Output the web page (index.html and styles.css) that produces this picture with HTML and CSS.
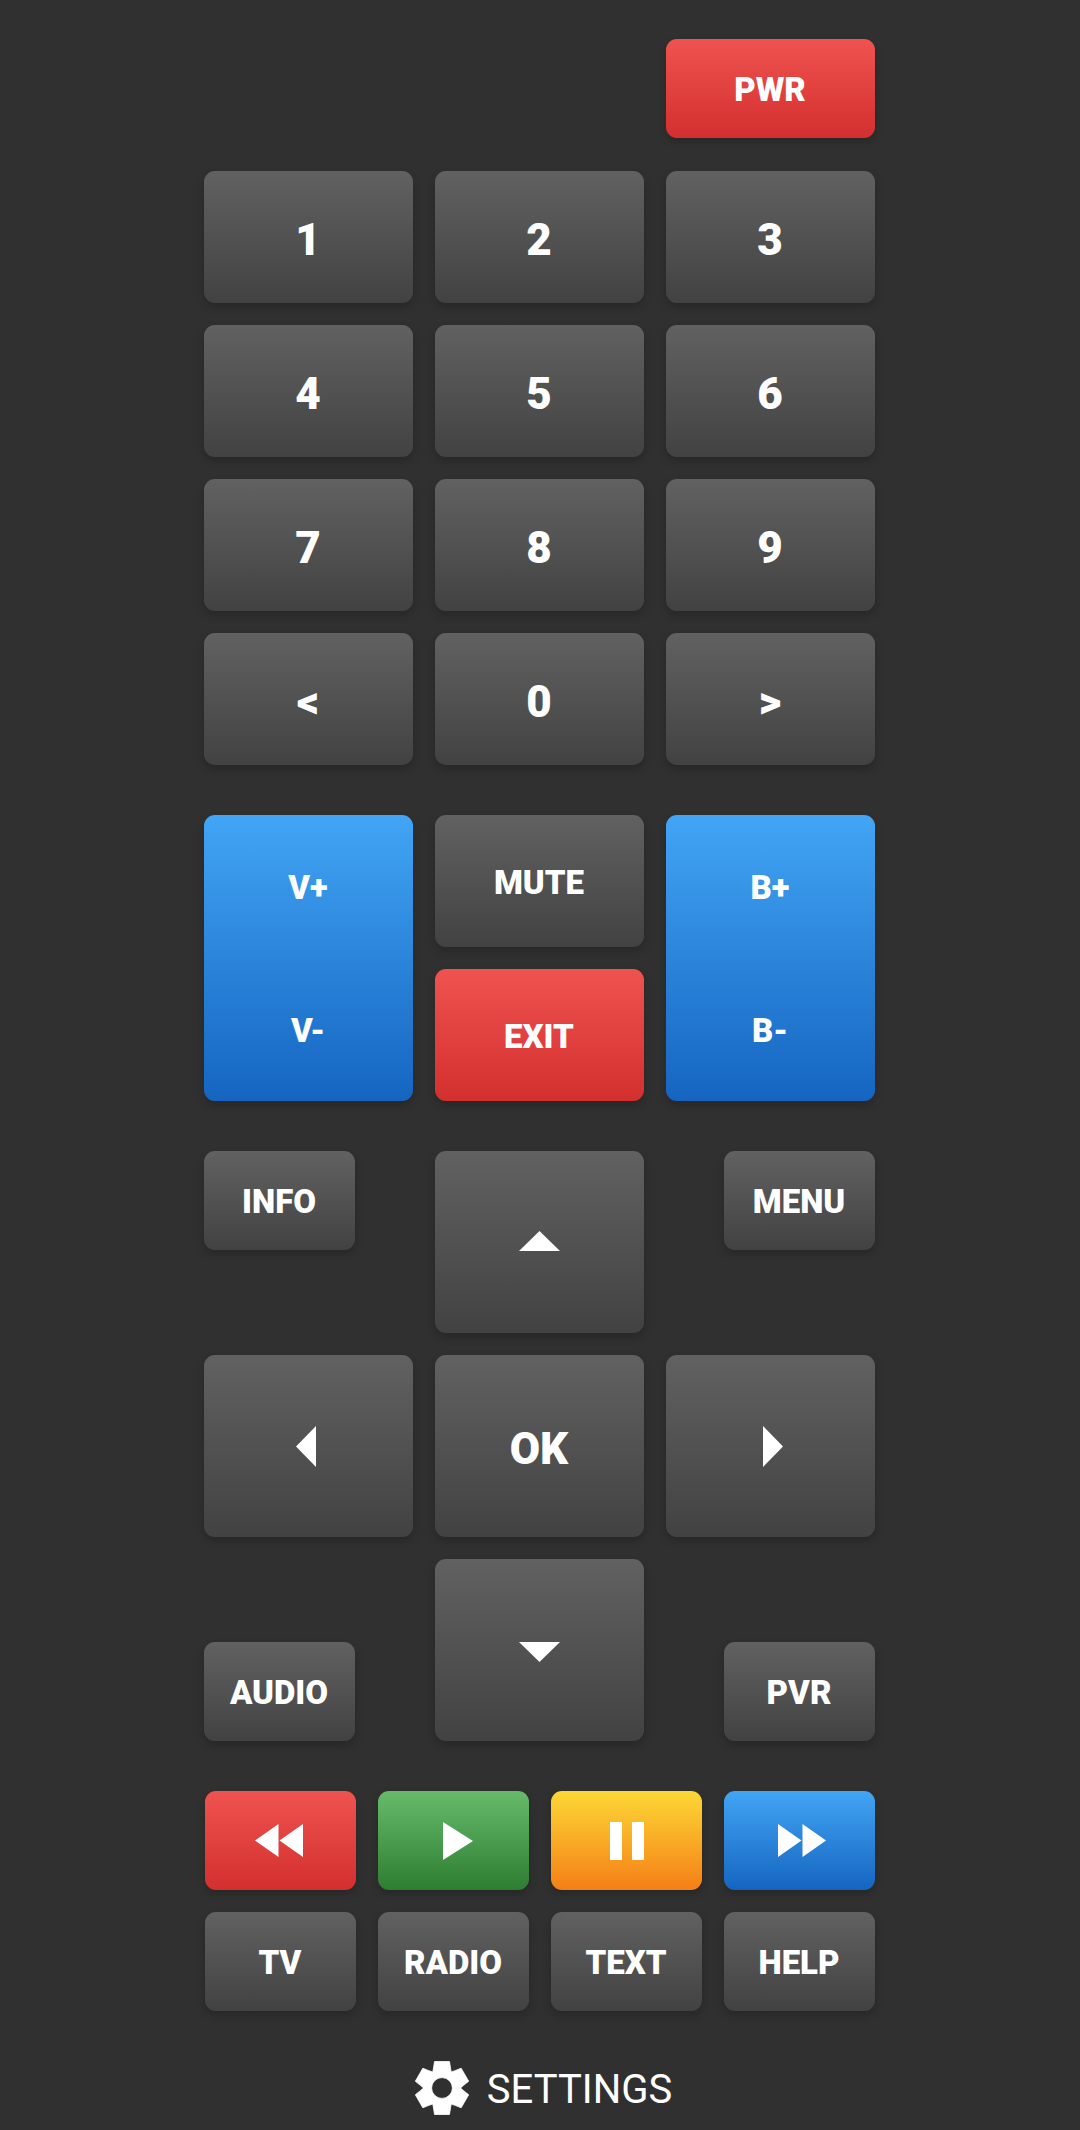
FILE: index.html
```html
<!DOCTYPE html>
<html lang="en">
<head>
<meta charset="utf-8">
<title>Remote</title>
<link rel="stylesheet" href="styles.css">
</head>
<body>
<main class="remote">
  <section class="grid3 power">
    <button class="key short red col3">PWR</button>
  </section>
  <section class="grid3 numbers">
    <button class="key tall digit">1</button>
    <button class="key tall digit">2</button>
    <button class="key tall digit">3</button>
    <button class="key tall digit">4</button>
    <button class="key tall digit">5</button>
    <button class="key tall digit">6</button>
    <button class="key tall digit">7</button>
    <button class="key tall digit">8</button>
    <button class="key tall digit">9</button>
    <button class="key tall digit">&lt;</button>
    <button class="key tall digit">0</button>
    <button class="key tall digit">&gt;</button>
  </section>
  <section class="grid3 volume">
    <div class="key blue rocker"><span>V+</span><span>V-</span></div>
    <button class="key tall">MUTE</button>
    <div class="key blue rocker"><span>B+</span><span>B-</span></div>
    <button class="key tall red">EXIT</button>
  </section>
  <section class="dpad">
    <div class="corner">
      <button class="key short side">INFO</button>
    </div>
    <button class="key pad nudge-up">
      <svg class="icon" width="41" height="20" viewBox="0 0 41 20"><path d="M20.5 0 41 20H0z"/></svg>
    </button>
    <div class="corner end">
      <button class="key short side">MENU</button>
    </div>
    <button class="key pad nudge-left">
      <svg class="icon" width="20" height="41" viewBox="0 0 20 41"><path d="M20 0 0 20.5 20 41z"/></svg>
    </button>
    <button class="key pad digit">OK</button>
    <button class="key pad nudge-right">
      <svg class="icon" width="20" height="41" viewBox="0 0 20 41"><path d="M0 0l20 20.5L0 41z"/></svg>
    </button>
    <div class="corner low">
      <button class="key short side">AUDIO</button>
    </div>
    <button class="key pad nudge-down">
      <svg class="icon" width="41" height="20" viewBox="0 0 41 20"><path d="M0 0h41L20.5 20z"/></svg>
    </button>
    <div class="corner low end">
      <button class="key short side">PVR</button>
    </div>
  </section>
  <section class="grid4 transport">
    <button class="key short red icon-key rew">
      <svg class="icon" width="48" height="33" viewBox="0 0 48 33"><path d="M23.5 0v33L0 16.500zM48 0v33L24.500 16.500z"/></svg>
    </button>
    <button class="key short green icon-key play">
      <svg class="icon" width="30" height="38" viewBox="0 0 30 38"><path d="M0 0l30 19L0 38z"/></svg>
    </button>
    <button class="key short yellow icon-key">
      <svg class="icon" width="34" height="38" viewBox="0 0 34 38"><path d="M0 0h12v38H0zM22 0h12v38H22z"/></svg>
    </button>
    <button class="key short blue icon-key fwd">
      <svg class="icon" width="48" height="33" viewBox="0 0 48 33"><path d="M0 0l23.500 16.500L0 33zM24.500 0 48 16.500 24.500 33z"/></svg>
    </button>
  </section>
  <section class="grid4 sources">
    <button class="key short">TV</button>
    <button class="key short">RADIO</button>
    <button class="key short">TEXT</button>
    <button class="key short">HELP</button>
  </section>
  <a class="settings">
    <svg class="gear" width="54" height="54" viewBox="0 0 54 54"><path fill-rule="evenodd" d="M18.500 7 19.500.5h15l1 6.500.75 3.980 3.820-1.340 6.130-2.390 7.500 13-5.130 4.110L45.500 27l3.070 2.640 5.130 4.110-7.500 13-6.130-2.390-3.820-1.340L35.500 47l-1 6.500h-15l-1-6.500-.75-3.980-3.820 1.340-6.130 2.390-7.500-13 5.130-4.110L8.500 27l-3.070-2.640-5.130-4.110 7.500-13 6.130 2.390 3.820 1.340zM37.400 27a10.400 10.400 0 1 0-20.800 0 10.400 10.400 0 1 0 20.800 0z"/></svg>
    <span class="settings-label">SETTINGS</span>
  </a>
</main>
</body>
</html>
```

FILE: styles.css
```css
* {
  box-sizing: border-box;
}

html,
body {
  margin: 0;
  background: #303030;
}

body {
  height: 2130px;
  overflow: hidden;
  font-family: Roboto, "Liberation Sans", sans-serif;
  color: #fff;
}

.remote {
  width: 671px;
  margin-left: 204px;
  padding-top: 39px;
}

.grid3 {
  display: grid;
  grid-template-columns: repeat(3, 209px);
  gap: 22px;
}

.grid4 {
  display: grid;
  grid-template-columns: repeat(4, 151px);
  gap: 22px;
  margin-left: 1px;
}

.power {
  margin-bottom: 33px;
}

.col3 {
  grid-column: 3;
}

.numbers {
  margin-bottom: 50px;
}

.volume {
  grid-template-rows: 132px 132px;
  margin-bottom: 50px;
}

.volume .rocker {
  grid-row: span 2;
}

.key {
  display: flex;
  align-items: center;
  justify-content: center;
  border: 0;
  padding: 3px 1px 0 0;
  border-radius: 11px;
  background: linear-gradient(#616161, #424242);
  box-shadow: 0 4px 8px rgba(0, 0, 0, 0.2);
  color: #fff;
  font: 900 33px/1 Roboto, "Liberation Sans", sans-serif;
}

.tall {
  height: 132px;
}

.short {
  height: 99px;
  padding-top: 1px;
}

.pad {
  height: 182px;
}

.digit {
  font-size: 44px;
  padding-top: 5px;
}

.red {
  background: linear-gradient(#ef5350, #d32f2f);
}

.blue {
  background: linear-gradient(#42a5f5, #1565c0);
}

.green {
  background: linear-gradient(#66bb6a, #2e7d32);
}

.yellow {
  background: linear-gradient(#fdd835, #f57f17);
}

.rocker {
  flex-direction: column;
  align-items: stretch;
  padding: 0 1px 0 0;
}

.rocker span {
  flex: 1;
  display: flex;
  align-items: center;
  justify-content: center;
  padding-top: 2px;
}

.dpad {
  display: grid;
  grid-template-columns: repeat(3, 209px);
  gap: 22px;
  margin-bottom: 50px;
}

.corner {
  display: flex;
}

.corner.end {
  justify-content: flex-end;
}

.corner.low {
  align-items: flex-end;
}

.side {
  width: 151px;
}

.nudge-up {
  padding: 0 0 2px;
}

.nudge-down {
  padding: 4px 0 0;
}

.nudge-left {
  padding: 0 5px 0 0;
}

.nudge-right {
  padding: 0 0 0 4px;
}

.icon-key {
  padding: 0;
}

.rew {
  padding-right: 3px;
}

.play {
  padding-left: 9px;
}

.fwd {
  padding-left: 4px;
}

.transport {
  margin-bottom: 22px;
}

.sources {
  margin-bottom: 50px;
}

.icon {
  display: block;
  fill: #fff;
}

.settings {
  display: flex;
  align-items: center;
  justify-content: center;
  gap: 18px;
  height: 54px;
  padding-left: 8px;
  font-size: 40px;
  line-height: 1;
}

.settings-label {
  padding-top: 4px;
}

.gear {
  display: block;
  fill: #fff;
  stroke: #fff;
  stroke-width: 0.8;
  stroke-linejoin: round;
}
```
